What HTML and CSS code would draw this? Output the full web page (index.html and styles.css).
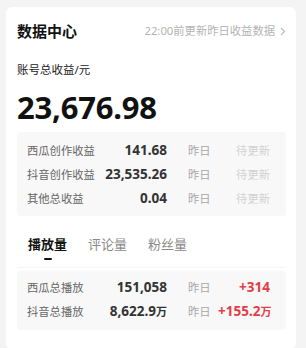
FILE: index.html
```html
<!DOCTYPE html>
<html lang="zh">
<head>
<meta charset="utf-8">
<link rel="stylesheet" href="styles.css">
</head>
<body>
<div class="card">
  <div class="header">
    <div class="title">数据中心</div>
    <div class="note">22:00前更新昨日收益数据
      <svg class="chev" width="6" height="9" viewBox="0 0 6 9"><path d="M1 1l3.5 3.5L1 8" fill="none" stroke="#bbb" stroke-width="1.2"/></svg>
    </div>
  </div>
  <div class="label">账号总收益/元</div>
  <div class="total">23,676.98</div>
  <div class="box box1">
    <div class="row"><span class="name">西瓜创作收益</span><span class="val">141.68</span><span class="day">昨日</span><span class="pending">待更新</span></div>
    <div class="row"><span class="name">抖音创作收益</span><span class="val">23,535.26</span><span class="day">昨日</span><span class="pending">待更新</span></div>
    <div class="row"><span class="name">其他总收益</span><span class="val">0.04</span><span class="day">昨日</span><span class="pending">待更新</span></div>
  </div>
  <div class="tabs">
    <div class="tab active">播放量</div>
    <div class="tab">评论量</div>
    <div class="tab">粉丝量</div>
  </div>
  <div class="box box2">
    <div class="row"><span class="name">西瓜总播放</span><span class="val">151,058</span><span class="day">昨日</span><span class="inc">+314</span></div>
    <div class="row"><span class="name">抖音总播放</span><span class="val">8,622.9<small>万</small></span><span class="day">昨日</span><span class="inc">+155.2<small>万</small></span></div>
  </div>
</div>
</body>
</html>
```

FILE: styles.css
```css
* { box-sizing: border-box; }
html, body { margin: 0; padding: 0; }
body {
  background: #f4f4f4;
  font-family: "Noto Sans", "Noto Sans CJK SC", sans-serif;
  width: 306px;
  height: 348px;
  padding: 7px 10px 6px 6px;
}
.card {
  background: #fff;
  border-radius: 6px;
  padding: 14px 10px 19px 11px;
}
.header {
  display: flex;
  justify-content: space-between;
  align-items: center;
  height: 20px;
}
.title {
  font-size: 15px;
  font-weight: 700;
  color: #111;
  line-height: 20px;
}
.note {
  font-size: 11.3px;
  color: #b4b4b4;
  display: flex;
  align-items: center;
  gap: 5px;
  line-height: 20px;
}
.chev { display: block; }
.label {
  margin-top: 21px;
  font-size: 11.5px;
  color: #222;
  line-height: 16px;
}
.total {
  margin-top: 11px;
  font-size: 31px;
  font-weight: 700;
  color: #111;
  line-height: 36px;
  letter-spacing: -0.2px;
}
.box {
  background: #f8f8f8;
  border-radius: 4px;
  padding: 6px 16px 6px 10px;
}
.box1 { margin-top: 7px; }
.row {
  display: grid;
  grid-template-columns: 73px 67px 51px 52px;
  align-items: center;
  height: 24px;
}
.name { font-size: 11.3px; color: #666; }
.val {
  font-size: 13.5px;
  font-weight: 700;
  color: #333;
  text-align: right;
}
.val small, .inc small { font-size: 11px; }
.day { font-size: 11.3px; color: #a8a8a8; padding-left: 21px; }
.pending { font-size: 11.3px; color: #d2d2d2; text-align: right; }
.inc {
  font-size: 13.5px;
  font-weight: 700;
  color: #e33c47;
  text-align: right;
  white-space: nowrap;
}
.tabs {
  display: flex;
  gap: 21px;
  padding-left: 11px;
  margin-top: 12px;
  height: 40px;
  border-bottom: 1px solid #f6f6f6;
}
.tab {
  position: relative;
  font-size: 13px;
  color: #8a8a8a;
  line-height: 18px;
  padding-top: 7px;
}
.tab.active { color: #111; font-weight: 700; }
.tab.active::after {
  content: "";
  position: absolute;
  left: 50%;
  top: 30px;
  width: 8px;
  height: 2px;
  margin-left: -4px;
  background: #111;
  border-radius: 1px;
}
.box2 { margin-top: 3px; padding-top: 4px; padding-bottom: 7px; }
```
